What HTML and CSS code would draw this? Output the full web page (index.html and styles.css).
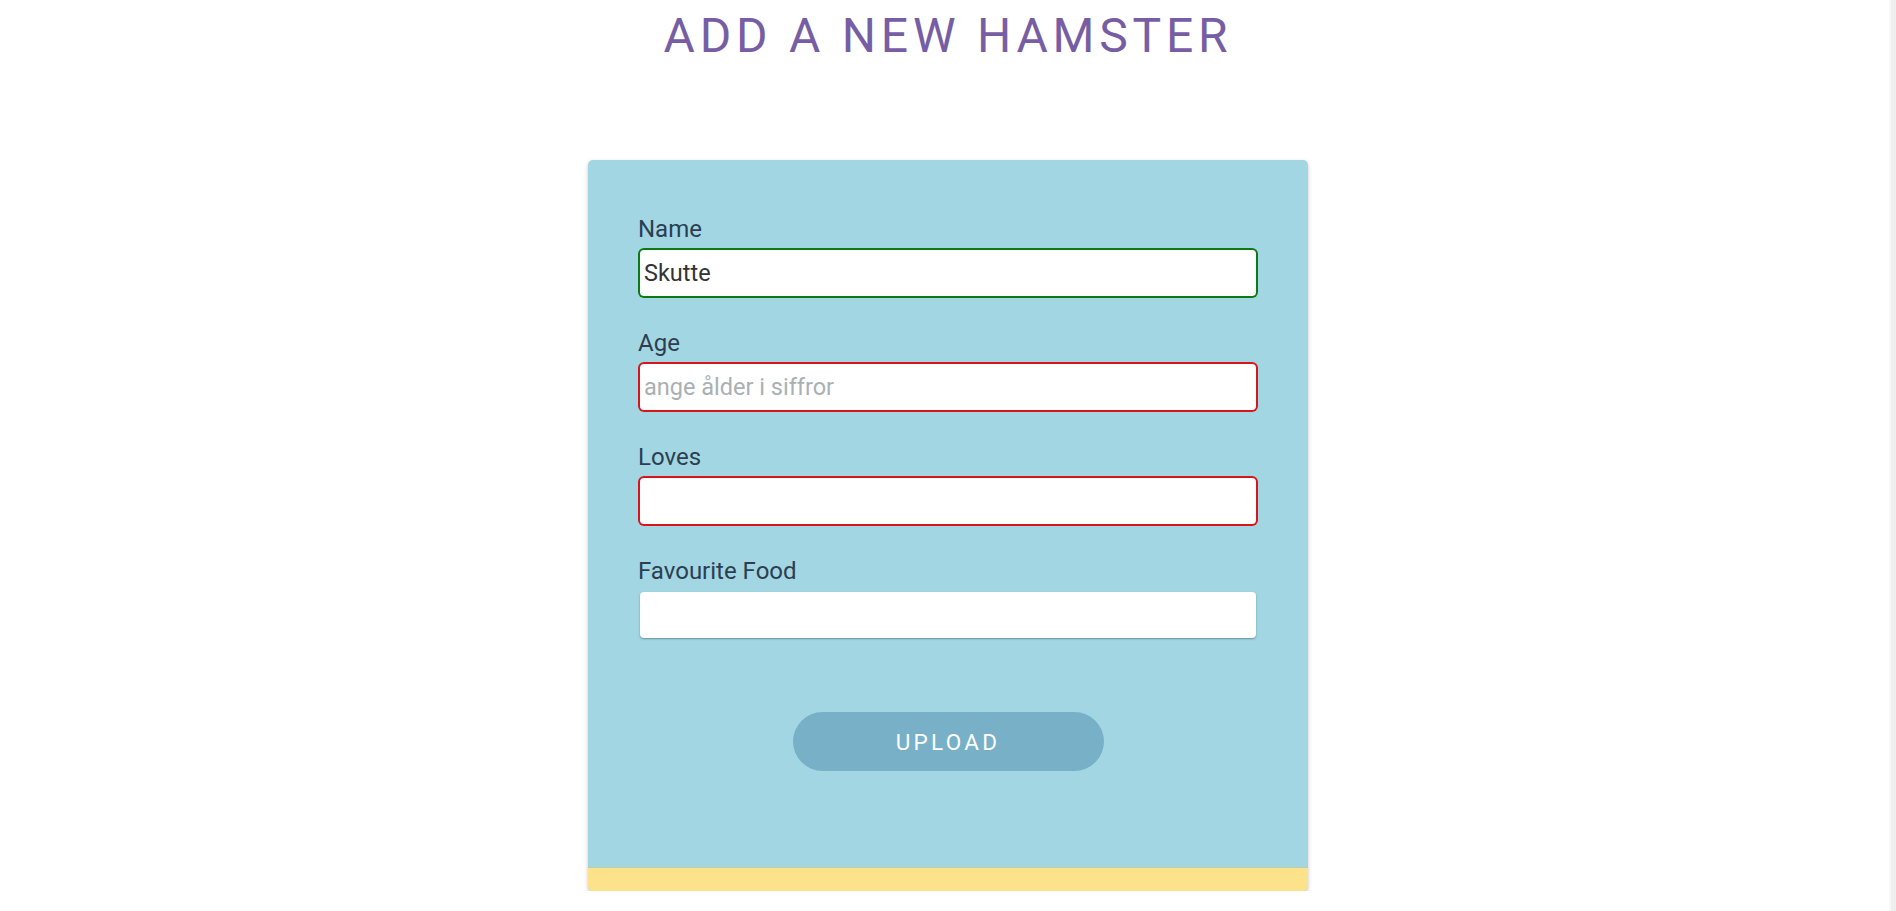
FILE: index.html
```html
<!DOCTYPE html>
<html lang="en">
<head>
<meta charset="utf-8">
<title>Add a new hamster</title>
<link rel="stylesheet" href="styles.css">
</head>
<body>
<main class="page">
  <h1 class="title">ADD A NEW HAMSTER</h1>
  <section class="card">
    <form class="form">
      <div class="field">
        <label class="label" for="name">Name</label>
        <input class="input valid" id="name" type="text" value="Skutte">
      </div>
      <div class="field">
        <label class="label" for="age">Age</label>
        <input class="input invalid" id="age" type="text" placeholder="ange ålder i siffror">
      </div>
      <div class="field">
        <label class="label" for="loves">Loves</label>
        <input class="input invalid" id="loves" type="text">
      </div>
      <div class="field">
        <label class="label" for="food">Favourite Food</label>
        <input class="input plain" id="food" type="text">
      </div>
      <div class="actions">
        <button class="upload" type="button">UPLOAD</button>
      </div>
    </form>
    <div class="card-footer"></div>
  </section>
</main>
</body>
</html>
```

FILE: styles.css
```css
html {
  background: linear-gradient(to right, #ffffff 0, #ffffff calc(100% - 7px), #f7f7f7 calc(100% - 7px), #f7f7f7 calc(100% - 5px), #efefef calc(100% - 5px));
  min-height: 100%;
}

body {
  margin: 0;
  font-family: Roboto, "Liberation Sans", Arial, sans-serif;
  color: #2c3e50;
}

.page {
  display: flex;
  flex-direction: column;
  align-items: center;
}

.title {
  margin: 8px 0 0;
  font-size: 48px;
  line-height: 56px;
  font-weight: 400;
  letter-spacing: 0.1em;
  color: #775ea4;
  text-align: center;
}

.card {
  width: 720px;
  margin-top: 96px;
  background: #a3d6e3;
  border-radius: 5px;
  box-shadow: 0 2px 4px rgba(0, 0, 0, 0.22);
  overflow: hidden;
  display: flex;
  flex-direction: column;
}

.form {
  display: flex;
  flex-direction: column;
  padding: 56px 50px 0;
}

.field {
  display: flex;
  flex-direction: column;
  gap: 7px;
  margin-bottom: 34px;
}

.label {
  font-size: 24px;
  line-height: 27px;
  color: #2c3e50;
}

.input {
  box-sizing: border-box;
  width: 616px;
  height: 46px;
  margin-left: 2px;
  border: none;
  border-radius: 4px;
  background: #ffffff;
  padding: 0 4px;
  font-family: Roboto, "Liberation Sans", Arial, sans-serif;
  font-size: 23.5px;
  color: #333333;
  outline: none;
}

.input::placeholder {
  color: #a9b0b4;
}

.valid {
  box-shadow: 0 0 0 2px #0b7a14;
}

.invalid {
  box-shadow: 0 0 0 2px #d8141c;
}

.plain {
  box-shadow: 0 1px 2px rgba(40, 90, 110, 0.55);
}

.actions {
  display: flex;
  justify-content: center;
  margin-top: 40px;
  margin-bottom: 96px;
}

.upload {
  width: 311px;
  height: 59px;
  border: none;
  border-radius: 30px;
  background: #77b0c7;
  color: #ffffff;
  font-family: Roboto, "Liberation Sans", Arial, sans-serif;
  font-size: 22.5px;
  letter-spacing: 3.3px;
  padding: 0;
  cursor: pointer;
}

.card-footer {
  height: 24px;
  background: #fce28a;
  border-top: 1px solid #b9cfa8;
  box-sizing: border-box;
}
```
